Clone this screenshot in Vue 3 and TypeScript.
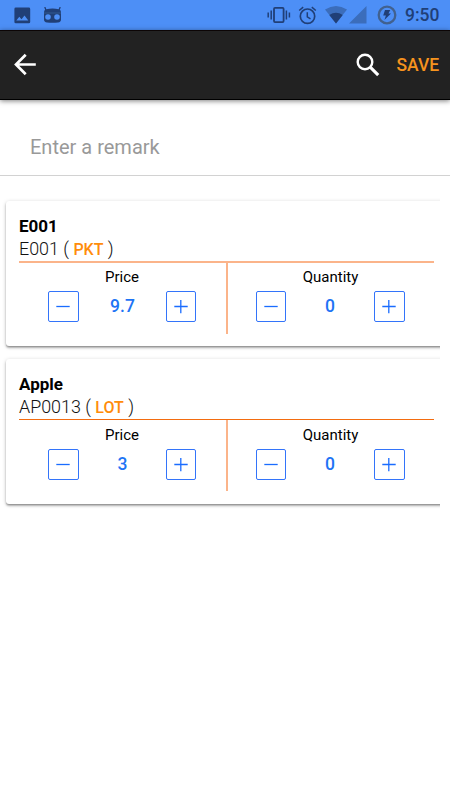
<script setup lang="ts">
import { ref } from 'vue'

interface Item {
  name: string
  code: string
  unit: string
  price: number
  quantity: number
}

const remark = ref('')
const items = ref<Item[]>([
  { name: 'E001', code: 'E001', unit: 'PKT', price: 9.7, quantity: 0 },
  { name: 'Apple', code: 'AP0013', unit: 'LOT', price: 3, quantity: 0 },
])

const fields: { key: 'price' | 'quantity'; label: string }[] = [
  { key: 'price', label: 'Price' },
  { key: 'quantity', label: 'Quantity' },
]

function step(item: Item, key: 'price' | 'quantity', delta: number) {
  item[key] = Math.max(0, Math.round((item[key] + delta) * 100) / 100)
}
</script>

<template>
  <div class="screen">
    <div class="status">
      <svg class="s-image" width="17" height="17" viewBox="0 0 17 17">
        <path fill="#203f77" fill-rule="evenodd" d="M1.8 0.5h13a1.4 1.4 0 0 1 1.4 1.4v13a1.4 1.4 0 0 1-1.4 1.4h-13a1.4 1.4 0 0 1-1.4-1.4v-13a1.4 1.4 0 0 1 1.4-1.4zM2.3 13.6h12l-3.8-5.2-3 3.8-2.2-2.5z" />
      </svg>
      <svg class="s-robot" width="19" height="17" viewBox="0 0 19 17">
        <path d="M1.800 0l1.500 4M17.200 0l-1.500 4" stroke="#203f77" stroke-width="1.300" fill="none" />
        <path fill="#203f77" d="M1 5q0-2.300 2.300-2.800Q9.500 .800 15.700 2.200 18 2.700 18 5v7.500q0 2.700-3 3-5.500.7-11 0-3-.3-3-3z" />
        <path d="M1 6h17" stroke="#39669f" stroke-width=".7" />
        <circle cx="5" cy="10" r="2.800" fill="#4d8ff6" />
        <circle cx="14" cy="10" r="2.800" fill="#4d8ff6" />
      </svg>
      <span class="spacer"></span>
      <svg class="s-vibrate" width="24" height="18" viewBox="0 0 24 18">
        <rect x="7" y="1.900" width="9.600" height="14.200" rx="1" fill="none" stroke="#203f77" stroke-width="1.800" />
        <path d="M4.200 4.500v9M1.200 6.500v5M19.400 4.500v9M22.400 6.500v5" stroke="#203f77" stroke-width="1.500" />
      </svg>
      <svg class="s-alarm" width="19" height="19" viewBox="0 0 19 19">
        <circle cx="9.500" cy="10.200" r="7.200" fill="none" stroke="#203f77" stroke-width="1.700" />
        <path d="M1.200 4.500l4-3.400M17.800 4.500l-4-3.400M9.300 6.200v4.600l3.200 2" fill="none" stroke="#203f77" stroke-width="1.500" />
      </svg>
      <svg class="s-wifi" width="22" height="18" viewBox="0 0 22 18">
        <path fill="#3b6dbb" d="M0 3.600Q11-3.600 22 3.600L11 17.500z" />
        <path fill="#203f77" d="M4.300 9.100Q11 4.600 17.700 9.100L11 17.500z" />
      </svg>
      <svg class="s-signal" width="18" height="18" viewBox="0 0 18 18">
        <path fill="#3b6dbb" d="M0 17.500L17.500 0v17.500z" />
      </svg>
      <svg class="s-battery" width="20" height="20" viewBox="0 0 20 20">
        <circle cx="10" cy="10" r="8.300" fill="none" stroke="#41618f" stroke-width="2.300" />
        <path fill="#203f77" d="M8 5h5.200l-1.700 3.500h2.500L7.400 14.900l1.500-4.300H6.200z" />
      </svg>
      <span class="clock">9:50</span>
    </div>

    <header class="toolbar">
      <svg class="back" width="24" height="24" viewBox="0 0 24 24">
        <path d="M22.800 11.500H3.500M12.700 1.700L3 11.500l9.700 9.800" fill="none" stroke="#fff" stroke-width="2.700" />
      </svg>
      <span class="spacer"></span>
      <svg class="search" width="24" height="24" viewBox="0 0 24 24">
        <circle cx="9" cy="9" r="7.300" fill="none" stroke="#fff" stroke-width="2.400" />
        <path d="M14.200 14.200l8 8" stroke="#fff" stroke-width="3.100" />
      </svg>
      <span class="save">SAVE</span>
    </header>

    <input v-model="remark" class="remark" placeholder="Enter a remark" />

    <main class="list">
      <section v-for="item in items" :key="item.code" class="card">
        <h2>{{ item.name }}</h2>
        <p class="code">{{ item.code }} ( <b>{{ item.unit }}</b> )</p>
        <div class="fields">
          <div v-for="f in fields" :key="f.key" class="field" :class="f.key">
            <div class="label">{{ f.label }}</div>
            <div class="stepper">
              <button @click="step(item, f.key, -1)">
                <svg width="14" height="14" viewBox="0 0 14 14"><path d="M0.300 6.500h13.400" /></svg>
              </button>
              <span class="value">{{ item[f.key] }}</span>
              <button @click="step(item, f.key, 1)">
                <svg width="14" height="14" viewBox="0 0 14 14"><path d="M0.300 6.500h13.400M6.800 0v13.200" /></svg>
              </button>
            </div>
          </div>
        </div>
      </section>
    </main>
  </div>
</template>

<style>
body {
  background: #fff;
}
</style>

<style scoped>
.screen {
  width: 450px;
  height: 800px;
  overflow: hidden;
  background: #fff;
  font-family: Roboto, "Liberation Sans", sans-serif;
  color: #000;
}
.screen * {
  box-sizing: border-box;
}
svg {
  display: block;
  flex: none;
}
.spacer {
  flex: 1;
}
.status {
  display: flex;
  align-items: center;
  height: 30px;
  padding: 0 10px 0 14px;
  background: #4d8ff6;
}
.s-robot {
  margin-left: 12px;
}
.s-alarm {
  margin-left: 7px;
}
.s-wifi {
  margin-left: 8px;
}
.s-signal {
  margin-left: 2px;
}
.s-battery {
  margin-left: 10px;
}
.clock {
  width: 35px;
  margin-left: 8px;
  font-size: 17.500px;
  font-weight: 500;
  line-height: 32px;
  color: #203f77;
  white-space: nowrap;
}
.toolbar {
  display: flex;
  align-items: center;
  height: 70px;
  padding: 0 10px 0 13px;
  background: #222;
  border-top: 1px solid #0c0505;
  border-bottom: 1px solid #000;
  box-shadow: 0 1px 5px rgba(0, 0, 0, .5);
}
.save {
  width: 44px;
  margin-left: 16px;
  padding-left: .5px;
  font-size: 17.500px;
  font-weight: 500;
  line-height: 22px;
  color: #f7931e;
}
.remark {
  display: block;
  width: 450px;
  height: 76px;
  padding: 19px 30px 0;
  border: 0;
  border-bottom: 1px solid #d2d2d2;
  outline: 0;
  background: transparent;
  font: 400 20px/26px Roboto, "Liberation Sans", sans-serif;
}
.remark::placeholder {
  color: #999;
  opacity: 1;
}
.list {
  width: 440px;
  padding: 25px 0 10px 6px;
  overflow: hidden;
}
.card {
  width: 441px;
  height: 145px;
  margin-bottom: 13px;
  padding: 14px 13px 0;
  border-radius: 3px;
  background: #fff;
  box-shadow: 0 2px 2px rgba(0, 0, 0, .22), 0 1px 4px rgba(0, 0, 0, .2), 0 1px 1px rgba(0, 0, 0, .15);
}
h2 {
  margin: 0;
  font-size: 17px;
  font-weight: 700;
  line-height: 23px;
}
.code {
  height: 23px;
  margin: 0;
  font-size: 17.900px;
  font-weight: 300;
  line-height: 22px;
  color: #111;
}
.code b {
  font-size: 16px;
  font-weight: 500;
  color: #ff8c0a;
}
.fields {
  display: flex;
  border-top: 1px solid #f36c10;
}
.field {
  width: 207px;
  height: 71px;
  padding-top: 5px;
}
.card:first-child .fields {
  border-top: 2px solid #fbb48a;
}
.card:first-child .field {
  padding-top: 4px;
}
.price {
  width: 209px;
  padding-right: 1px;
  border-right: 2px solid #fbb48a;
}
.quantity {
  width: 205px;
}
.label {
  font-size: 15px;
  line-height: 20px;
  text-align: center;
}
.stepper {
  display: flex;
  align-items: center;
  justify-content: space-between;
  width: 149px;
  margin: 4px auto 0;
}
button {
  display: flex;
  align-items: center;
  justify-content: center;
  width: 31px;
  height: 31px;
  padding: 0;
  border: 1px solid #3374fa;
  border-radius: 2px;
  background: #fff;
}
.price button:last-child,
.quantity button:first-child {
  width: 30px;
}
button path {
  fill: none;
  stroke: #1a6cff;
  stroke-width: 1.300;
}
.value {
  font-size: 17.500px;
  font-weight: 500;
  line-height: 20px;
  margin-top: -1px;
  color: #1e74f5;
}
</style>
